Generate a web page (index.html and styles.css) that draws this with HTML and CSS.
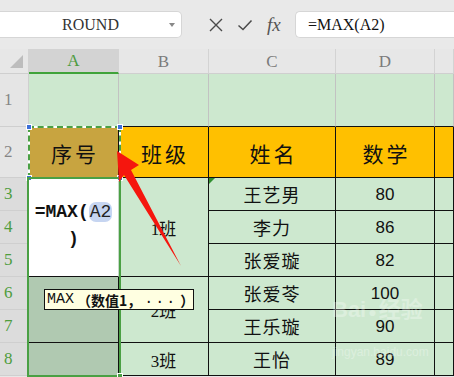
FILE: index.html
```html
<!DOCTYPE html>
<html lang="zh">
<head>
<meta charset="utf-8">
<link rel="stylesheet" href="styles.css">
</head>
<body>
<div class="app">
  <div class="toolbar">
    <div class="namebox"><span class="name">ROUND</span><i class="caret"></i></div>
    <div class="tools">
      <svg class="ico" width="16" height="16" viewBox="0 0 16 16"><path d="M2 2 L14 14 M14 2 L2 14" stroke="#4a4a4a" stroke-width="1.4" fill="none"/></svg>
      <svg class="ico" width="16" height="16" viewBox="0 0 16 16"><path d="M1.5 8.5 L6 12.5 L14.5 3.5" stroke="#4a4a4a" stroke-width="1.5" fill="none"/></svg>
      <span class="fx">fx</span>
    </div>
    <div class="fbar">=MAX(A2)</div>
  </div>
  <div class="sheet">
    <div class="corner"><i class="tri"></i></div>
    <div class="ch sel">A</div><div class="ch">B</div><div class="ch">C</div><div class="ch">D</div><div class="ch"></div>

    <div class="rh">1</div>
    <div class="c g r1a"></div><div class="c g r1"></div><div class="c g r1"></div><div class="c g r1"></div><div class="c g r1"></div>

    <div class="rh">2</div>
    <div class="c gold hd"><span class="hdt">序号</span></div>
    <div class="c y hd"><span class="hdt">班级</span></div>
    <div class="c y hd"><span class="hdt">姓名</span></div>
    <div class="c y hd"><span class="hdt">数学</span></div>
    <div class="c y"></div>

    <div class="rh on">3</div>
    <div class="c w span3 edit"><div class="fl">=MAX(<span class="ref">A2</span></div><div class="fl">)</div></div>
    <div class="c g b span3 cls">1班</div>
    <div class="c g b nm mark">王艺男</div><div class="c g b num">80</div><div class="c g b"></div>

    <div class="rh on">4</div>
    <div class="c g b nm">李力</div><div class="c g b num">86</div><div class="c g b"></div>

    <div class="rh on">5</div>
    <div class="c g b nm">张爱璇</div><div class="c g b num">82</div><div class="c g b"></div>

    <div class="rh on">6</div>
    <div class="c s b span2"></div>
    <div class="c g b span2 cls">2班</div>
    <div class="c g b nm">张爱苓</div><div class="c g b num">100</div><div class="c g b"></div>

    <div class="rh on">7</div>
    <div class="c g b nm">王乐璇</div><div class="c g b num">90</div><div class="c g b"></div>

    <div class="rh on">8</div>
    <div class="c s b"></div>
    <div class="c g b cls">3班</div>
    <div class="c g b nm">王怡</div><div class="c g b num">89</div><div class="c g b"></div>

    <div class="ants"><i class="h h1"></i><i class="h h2"></i><i class="h h3"></i><i class="h h4"></i></div>
    <div class="selbox"><i class="fill"></i></div>
    <div class="tip"><span class="mono">MAX</span><span class="cj">（数值1，</span><span class="dots">...</span><span class="cj">）</span></div>
    <div class="wm"><div class="wm1">Bai<span class="paw">●</span>经验</div><div class="wm2">jingyan.baidu.com</div></div>
  </div>
  <svg class="arrow" width="454" height="377" viewBox="0 0 454 377">
    <polygon points="117,151 139,165 131,170 181,266 124,175 119,182" fill="#f5160e"/>
  </svg>
</div>
</body>
</html>
```
FILE: styles.css
```css
* { box-sizing: border-box; }
html, body { margin: 0; padding: 0; }
body { width: 454px; height: 377px; overflow: hidden; background: #e7e7e7; font-family: "Liberation Serif", serif; }
.app { position: relative; width: 454px; height: 377px; }

.toolbar { height: 49px; display: flex; align-items: center; background: #e9e9e9; }
.namebox { width: 182px; height: 27px; background: #fff; border: 1px solid #d6d6d6; border-left: none; border-radius: 0 5px 5px 0; display: flex; align-items: center; position: relative; }
.name { flex: 1; text-align: center; font-size: 16px; color: #333; padding-left: 12px; font-family: "Liberation Serif", serif; }
.caret { width: 0; height: 0; border-left: 3.5px solid transparent; border-right: 3.5px solid transparent; border-top: 4px solid #888; margin-right: 6px; }
.tools { width: 113px; display: flex; align-items: center; padding-left: 26px; gap: 13px; }
.ico { display: block; }
.fx { font-family: "Liberation Serif", serif; font-style: italic; font-size: 19px; color: #555; margin-left: 1px; }
.fbar { flex: 1; height: 27px; background: #fff; border: 1px solid #d6d6d6; border-right: none; border-radius: 5px 0 0 5px; font-size: 16px; line-height: 25px; padding-left: 12px; color: #111; font-family: "Liberation Serif", serif; }

.sheet { position: relative; display: grid; grid-template-columns: 29px 90px 90px 127px 99px 19px; grid-template-rows: 25px 53px 51px repeat(6, 33px); }
.corner { background: #e7e7e7; border-bottom: 1px solid #cfcfcf; border-right: 1px solid #d3d3d3; position: relative; }
.tri { position: absolute; left: 10px; top: 6px; width: 0; height: 0; border-left: 13px solid transparent; border-bottom: 13px solid #bdbdbd; }
.ch { background: #e7e7e7; border-right: 1px solid #d3d3d3; border-bottom: 1px solid #cfcfcf; text-align: center; font-size: 17px; line-height: 25px; color: #7b7b7b; }
.ch.sel { background: #d3d3d3; color: #4d9b3e; border-bottom: 2px solid #3fa33a; line-height: 24px; }
.rh { background: #e5e5e5; border-bottom: 1px solid #cfcfcf; border-right: 1px solid #cfcfcf; font-size: 17px; color: #858585; display: flex; align-items: center; padding-left: 4px; }
.rh.on { background: #dcdcdc; color: #4f9d3e; }

.c { border-right: 1px solid #c5d8c7; border-bottom: 1px solid #c5d8c7; display: flex; align-items: center; justify-content: center; color: #111; }
.g { background: #cde8cf; }
.r1 { border-bottom-color: #111; border-right-color: #c2c2c2; }
.r1a { border-right-color: #c2c2c2; border-bottom-color: #c2c2c2; }
.y { background: #ffc000; border-right-color: #111; border-bottom-color: #111; }
.gold { background: #c8a440; border-right-color: #111; border-bottom-color: #111; }
.b { border-right-color: #111; border-bottom-color: #111; }
.w { background: #fff; border-bottom-color: #111; }
.s { background: #b0c9b1; }
.span3 { grid-row: span 3; }
.span2 { grid-row: span 2; }
.hd { font-family: "Noto Sans CJK SC", sans-serif; font-size: 21px; }
.hdt { letter-spacing: 3px; margin-right: -3px; padding-top: 2px; }
.nm { font-family: "Noto Sans CJK SC", sans-serif; font-size: 18px; letter-spacing: 1px; }
.num { font-family: "Liberation Sans", sans-serif; font-size: 17px; padding-top: 2px; }
.cls { font-family: "Liberation Serif", "Noto Sans CJK SC", serif; font-size: 17px; }
.mark { position: relative; }
.mark::before { content: ""; position: absolute; left: 0; top: 0; border-top: 6px solid #2f8f2f; border-right: 6px solid transparent; }

.edit { flex-direction: column; padding-bottom: 2px; }
.fl { font-family: "Liberation Mono", monospace; font-weight: bold; font-size: 18px; line-height: 27px; color: #111; white-space: nowrap; }
.ref { font-weight: normal; background: #c6d5f1; border-radius: 7px; padding: 0 1px; color: #222; }

.ants { position: absolute; left: 28px; top: 77px; width: 93px; height: 53px; border: 2px solid #fff; }
.ants::before { content: ""; position: absolute; left: -2px; top: -2px; right: -2px; bottom: -2px; border: 2px dashed #4aa044; }
.h { position: absolute; width: 6px; height: 6px; background: #3d6fd8; border: 1px solid #fff; }
.h1 { left: -4px; top: -4px; }
.h2 { right: -4px; top: -4px; }
.h3 { right: -4px; bottom: -4px; }
.h4 { left: -4px; bottom: -4px; }

.selbox { position: absolute; left: 27px; top: 128px; width: 94px; height: 200px; border: 2px solid #4aa044; }
.fill { position: absolute; right: -4px; bottom: -4px; width: 6px; height: 6px; background: #4aa044; border: 1px solid #fff; }

.tip { position: absolute; left: 44px; top: 240px; width: 150px; height: 21px; padding: 0 2px; background: #ffffe1; border: 1px solid #111; display: flex; align-items: center; gap: 3px; font-size: 15px; color: #111; white-space: nowrap; overflow: hidden; }
.mono { font-family: "Liberation Mono", monospace; font-size: 15px; }
.cj { font-family: "Noto Sans CJK SC", sans-serif; font-weight: bold; font-size: 14px; }
.dots { font-family: "Liberation Mono", monospace; letter-spacing: 2px; }

.wm { position: absolute; left: 332px; top: 248px; color: #fff; opacity: 0.3; font-family: "Liberation Sans", "Noto Sans CJK SC", sans-serif; }
.wm1 { font-size: 22px; font-weight: bold; line-height: 26px; }
.paw { font-size: 14px; margin: 0 2px; }
.wm2 { font-size: 12px; margin-top: 20px; }

.arrow { position: absolute; left: 0; top: 0; pointer-events: none; }
```
